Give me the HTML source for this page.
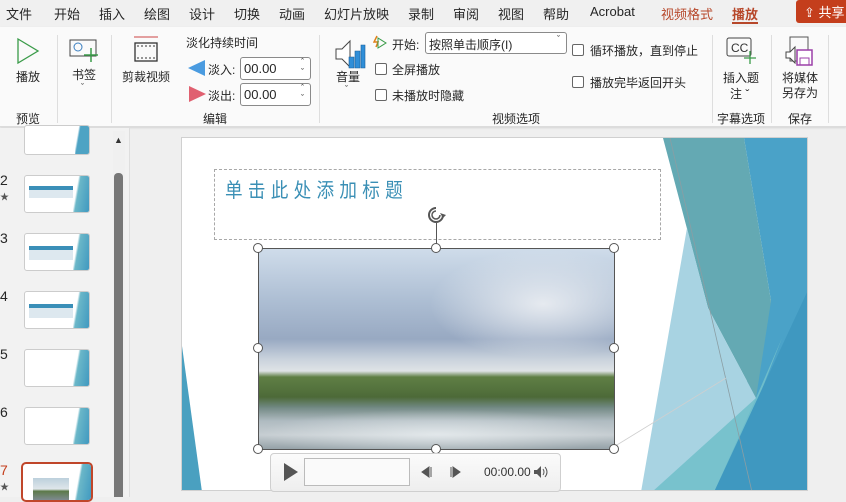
<!DOCTYPE html>
<html><head><meta charset="utf-8"><style>
*{margin:0;padding:0;box-sizing:border-box}
body{width:846px;height:497px;overflow:hidden;background:#efefef;font-family:"Liberation Sans","Noto Sans CJK SC",sans-serif;color:#262626;position:relative;font-size:12px}
.a{position:absolute;white-space:nowrap}
.tabs{position:absolute;left:0;top:0;width:846px;height:27px;background:#f0f0f0}
.tabs span{position:absolute;top:4px;font-size:13px}
.rib{position:absolute;left:0;top:27px;width:846px;height:100px;background:#fafafa;border-bottom:1px solid #dcdcdc;box-shadow:0 1px 2px rgba(0,0,0,.12)}
.sep{position:absolute;top:8px;width:1px;height:88px;background:#dedede}
.cb{position:absolute;width:12px;height:12px;border:1px solid #666;border-radius:2px;background:#fff}
.inp{position:absolute;border:1px solid #8a8a8a;border-radius:3px;background:#fff;font-size:13px;padding-left:3px}
.h{position:absolute;width:10px;height:10px;border:1.5px solid #555;border-radius:50%;background:#fff}
</style></head><body>
<div class="tabs">
<span style="left:6px">文件</span><span style="left:54px">开始</span><span style="left:99px">插入</span><span style="left:144px">绘图</span><span style="left:189px">设计</span><span style="left:234px">切换</span><span style="left:279px">动画</span><span style="left:324px">幻灯片放映</span><span style="left:408px">录制</span><span style="left:453px">审阅</span><span style="left:498px">视图</span><span style="left:543px">帮助</span><span style="left:590px">Acrobat</span><span style="left:661px;color:#b7472a">视频格式</span><span style="left:732px;color:#b7472a;font-weight:bold">播放</span>
<div class="a" style="left:732px;top:22px;width:26px;height:2px;background:#b7472a"></div>
<div class="a" style="left:796px;top:0;width:50px;height:23px;background:#c43e1c;border-radius:3px 0 0 3px;color:#fff;font-size:13px;padding:2px 0 0 8px">⇪ 共享</div>
</div>
<div class="rib">
<svg class="a" style="left:16px;top:10px" width="24" height="28"><path d="M2 2 L22 14 L2 26Z" fill="none" stroke="#3a9b49" stroke-width="1.3"/></svg>
<div class="a" style="left:16px;top:41px">播放</div>
<div class="a" style="left:16px;top:83px">预览</div>
<div class="sep" style="left:57px"></div>
<svg class="a" style="left:69px;top:9px" width="32" height="28"><rect x="1" y="4" width="26" height="16" fill="none" stroke="#444"/><circle cx="9" cy="11" r="4" fill="none" stroke="#3a7fc0"/><path d="M22 12v14M15 19h14" stroke="#3a9b49" stroke-width="1.5"/></svg>
<div class="a" style="left:72px;top:39px">书签</div>
<div class="a" style="left:81px;top:55px;font-size:9px">ˇ</div>
<div class="sep" style="left:111px"></div>
<svg class="a" style="left:133px;top:8px" width="26" height="28"><path d="M1 2h24" stroke="#c44" /><rect x="2" y="8" width="22" height="18" fill="none" stroke="#333" stroke-width="1.3"/><path d="M5 10v2M9 10v2M13 10v2M17 10v2M21 10v2M5 22v2M9 22v2M13 22v2M17 22v2M21 22v2" stroke="#333"/></svg>
<div class="a" style="left:122px;top:41px">剪裁视频</div>
<div class="a" style="left:186px;top:7px">淡化持续时间</div>
<svg class="a" style="left:188px;top:33px" width="18" height="16"><path d="M17 0v16L0 8z" fill="#4a9be0"/></svg>
<div class="a" style="left:208px;top:34px">淡入:</div>
<div class="inp" style="left:240px;top:30px;width:71px;height:23px;padding-top:3px">00.00<span style="position:absolute;right:6px;top:-1px;font-size:9px;line-height:10px">ˆ<br>ˇ</span></div>
<svg class="a" style="left:188px;top:59px" width="18" height="16"><path d="M1 0v16L18 8z" fill="#e06070"/></svg>
<div class="a" style="left:208px;top:60px">淡出:</div>
<div class="inp" style="left:240px;top:56px;width:71px;height:23px;padding-top:3px">00.00<span style="position:absolute;right:6px;top:-1px;font-size:9px;line-height:10px">ˆ<br>ˇ</span></div>
<div class="a" style="left:203px;top:83px">编辑</div>
<div class="sep" style="left:319px"></div>
<svg class="a" style="left:334px;top:12px" width="32" height="30"><path d="M2 10h6l8-8v26l-8-8H2z" fill="#fff" stroke="#444"/><path d="M15 18h5v11h-5zM21 12h5v17h-5zM27 6h4v23h-4z" fill="#2f8ed8" stroke="#1a5e99" stroke-width=".6"/></svg>
<div class="a" style="left:336px;top:41px">音量</div>
<div class="a" style="left:345px;top:57px;font-size:9px">ˇ</div>
<svg class="a" style="left:373px;top:8px" width="14" height="15"><path d="M4 1l-3 6h4l-2 5" fill="none" stroke="#e0801a" stroke-width="1.5"/><path d="M5 3l8 5-8 5z" fill="none" stroke="#3a9b49"/></svg>
<div class="a" style="left:392px;top:9px">开始:</div>
<div class="inp" style="left:425px;top:5px;width:142px;height:22px;padding-top:3px;font-size:12px">按照单击顺序(I)<span style="position:absolute;right:6px;top:1px;font-size:9px">ˇ</span></div>
<div class="cb" style="left:375px;top:36px"></div><div class="a" style="left:392px;top:34px">全屏播放</div>
<div class="cb" style="left:375px;top:62px"></div><div class="a" style="left:392px;top:60px">未播放时隐藏</div>
<div class="cb" style="left:572px;top:17px"></div><div class="a" style="left:590px;top:15px">循环播放，直到停止</div>
<div class="cb" style="left:572px;top:49px"></div><div class="a" style="left:590px;top:47px">播放完毕返回开头</div>
<div class="a" style="left:492px;top:83px">视频选项</div>
<div class="sep" style="left:712px"></div>
<svg class="a" style="left:726px;top:10px" width="32" height="28"><rect x="1" y="1" width="24" height="18" rx="2" fill="none" stroke="#444"/><text x="5" y="15" font-size="12" font-family="Liberation Sans" fill="#333">CC</text><path d="M24 14v13M18 21h12" stroke="#3a9b49" stroke-width="1.3"/></svg>
<div class="a" style="left:723px;top:42px">插入题</div>
<div class="a" style="left:730px;top:58px">注 ˇ</div>
<div class="a" style="left:717px;top:83px">字幕选项</div>
<div class="sep" style="left:771px"></div>
<svg class="a" style="left:785px;top:9px" width="30" height="32"><rect x="5" y="1" width="18" height="24" fill="none" stroke="#555"/><path d="M1 16h4l5-5v16l-5-5H1z" fill="#fff" stroke="#444"/><rect x="12" y="14" width="15" height="15" fill="#fff" stroke="#9b3fa8" stroke-width="1.5"/><rect x="15" y="22" width="9" height="7" fill="none" stroke="#9b3fa8"/></svg>
<div class="a" style="left:782px;top:42px">将媒体</div>
<div class="a" style="left:782px;top:57px">另存为</div>
<div class="a" style="left:788px;top:83px">保存</div>
<div class="sep" style="left:828px"></div>
</div>
<!-- left panel -->
<div class="a" style="left:0;top:128px;width:130px;height:369px;background:#f2f2f2;border-right:1px solid #dedede"></div>
<div class="a" style="left:113px;top:131px;width:12px;height:366px;background:#f0f0f0"></div>
<div class="a" style="left:114px;top:135px;font-size:9px;color:#333">▲</div>
<div class="a" style="left:114px;top:173px;width:9px;height:324px;background:#777;border-radius:4px 4px 0 0"></div>
<div class="a" style="left:24px;top:125px;width:66px;height:30px;background:#fff;border:1px solid #ccc;border-radius:3px;overflow:hidden"><div class="a" style="right:0;top:0;width:14px;height:30px;background:linear-gradient(100deg,#fff 20%,#4ea3c4 30%)"></div></div>
<div class="a" style="left:0;top:172px;font-size:14px">2</div><div class="a" style="left:0;top:190px;font-size:9px;color:#555">★</div>
<div class="a" style="left:0;top:230px;font-size:14px">3</div>
<div class="a" style="left:0;top:288px;font-size:14px">4</div>
<div class="a" style="left:0;top:346px;font-size:14px">5</div>
<div class="a" style="left:0;top:404px;font-size:14px">6</div>
<div class="a" style="left:0;top:462px;font-size:14px;color:#c43e1c">7</div><div class="a" style="left:0;top:480px;font-size:9px;color:#555">★</div>
<div class="a" style="left:24px;top:175px;width:66px;height:38px;background:#fff;border:1px solid #ccc;border-radius:3px;overflow:hidden"><div class="a" style="left:4px;top:10px;width:44px;height:4px;background:#3a8fb8"></div><div class="a" style="left:4px;top:14px;width:44px;height:8px;background:#dde8ef"></div><div class="a" style="right:0;top:0;width:16px;height:38px;background:linear-gradient(100deg,#fff 25%,#6bb7c8 35%,#3f98c0)"></div></div>
<div class="a" style="left:24px;top:233px;width:66px;height:38px;background:#fff;border:1px solid #ccc;border-radius:3px;overflow:hidden"><div class="a" style="left:4px;top:12px;width:44px;height:4px;background:#3a8fb8"></div><div class="a" style="left:4px;top:16px;width:44px;height:10px;background:#dde8ef"></div><div class="a" style="right:0;top:0;width:16px;height:38px;background:linear-gradient(100deg,#fff 25%,#6bb7c8 35%,#3f98c0)"></div></div>
<div class="a" style="left:24px;top:291px;width:66px;height:38px;background:#fff;border:1px solid #ccc;border-radius:3px;overflow:hidden"><div class="a" style="left:4px;top:12px;width:44px;height:4px;background:#3a8fb8"></div><div class="a" style="left:4px;top:16px;width:44px;height:10px;background:#dde8ef"></div><div class="a" style="right:0;top:0;width:16px;height:38px;background:linear-gradient(100deg,#fff 25%,#6bb7c8 35%,#3f98c0)"></div></div>
<div class="a" style="left:24px;top:349px;width:66px;height:38px;background:#fff;border:1px solid #ccc;border-radius:3px;overflow:hidden"><div class="a" style="right:0;top:0;width:16px;height:38px;background:linear-gradient(100deg,#fff 25%,#6bb7c8 35%,#3f98c0)"></div></div>
<div class="a" style="left:24px;top:407px;width:66px;height:38px;background:#fff;border:1px solid #ccc;border-radius:3px;overflow:hidden"><div class="a" style="right:0;top:0;width:16px;height:38px;background:linear-gradient(100deg,#fff 25%,#6bb7c8 35%,#3f98c0)"></div></div>
<div class="a" style="left:21px;top:462px;width:72px;height:40px;border:2.5px solid #c0462a;border-radius:5px;background:#fff;overflow:hidden"><div class="a" style="left:10px;top:14px;width:36px;height:22px;background:linear-gradient(#bcd0dc,#dfe6ea 50%,#5d7a4a 60%,#7e8a90)"></div><div class="a" style="right:0;top:0;width:16px;height:40px;background:linear-gradient(100deg,#fff 25%,#6bb7c8 35%,#3f98c0)"></div></div>
<!-- slide -->
<div class="a" style="left:181px;top:137px;width:627px;height:354px;background:#fff;border:1px solid #d0d0d0;overflow:hidden">
<svg width="627" height="354" style="position:absolute;left:0;top:0">
<path d="M0 208 L20 354 L0 354Z" fill="#4aa0c0"/>
<path d="M562 0 L627 0 L627 354 L532 354 L589 163 Z" fill="#4aa2c8"/>
<path d="M481 0 L562 0 L589 163 L574 260 L526 170 Z" fill="#64a9b3"/>
<path d="M505 90 L526 170 L574 260 L532 354 L459 354 Z" fill="#a8d3e2"/>
<path d="M574 260 L600 200 L540 354 L470 354 Z" fill="#72c0cb" opacity=".9"/>
<path d="M627 150 L627 354 L532 354 Z" fill="#3f98c0"/>
<path d="M488 0 L570 354" stroke="#8a9ea4" stroke-width=".8"/>
<path d="M544 240 L430 310" stroke="#cfcfcf" stroke-width=".8"/>
</svg>
<div class="a" style="left:32px;top:31px;width:447px;height:71px;border:1.5px dashed #a8a8a8"></div>
<div class="a" style="left:43px;top:36px;font-size:20px;letter-spacing:6px;color:#3a8fb5;font-family:'Noto Sans CJK SC',sans-serif;transform:scaleX(.88);transform-origin:left">单击此处添加标题</div>
</div>
<!-- rotate -->
<svg class="a" style="left:426px;top:204px" width="22" height="44"><path d="M10 4a7 7 0 1 0 7 7" fill="none" stroke="#555" stroke-width="2"/><path d="M10 7a4 4 0 1 0 4 4" fill="none" stroke="#555" stroke-width="1.5"/><path d="M14 9l6 2-3 3z" fill="#555"/><path d="M10.5 19v25" stroke="#555"/></svg>
<!-- video -->
<div class="a" style="left:258px;top:248px;width:357px;height:202px;border:1.5px solid #555;overflow:hidden;background:linear-gradient(#cfdcea 0%,#aebfd4 25%,#98a9c2 45%,#c9d2dc 55%,#dfe3e6 61%,#5f7f45 64%,#4d6a38 74%,#6f8780 79%,#b9c4ca 86%,#d4dade 93%,#9aa6ac 100%)">
<div class="a" style="left:170px;top:0;width:190px;height:110px;background:radial-gradient(ellipse at 60% 50%,rgba(240,242,245,.85),rgba(240,242,245,0) 70%)"></div>
<div class="a" style="left:0;top:160px;width:357px;height:42px;background:radial-gradient(ellipse at 50% 60%,rgba(235,240,242,.6),rgba(120,135,140,.15) 70%)"></div>
</div>
<div class="h" style="left:253px;top:243px"></div><div class="h" style="left:431px;top:243px"></div><div class="h" style="left:609px;top:243px"></div>
<div class="h" style="left:253px;top:343px"></div><div class="h" style="left:609px;top:343px"></div>
<div class="h" style="left:253px;top:444px"></div><div class="h" style="left:431px;top:444px"></div><div class="h" style="left:609px;top:444px"></div>
<!-- controls -->
<div class="a" style="left:270px;top:453px;width:291px;height:39px;border:1px solid #cfcfcf;border-radius:4px;background:linear-gradient(#fbfbfb,#eeeeee)"></div>
<svg class="a" style="left:283px;top:462px" width="16" height="20"><path d="M1 1L15 10L1 19Z" fill="#555"/></svg>
<div class="a" style="left:304px;top:458px;width:106px;height:28px;border:1px solid #bbb;background:#fafafa"></div>
<svg class="a" style="left:420px;top:465px" width="50" height="14"><path d="M9 2L2 7l7 5z M11 2v10" fill="#555" stroke="#555"/><path d="M31 2v10M33 2l7 5-7 5z" fill="#555" stroke="#555"/></svg>
<div class="a" style="left:484px;top:465px;font-size:12px;color:#333">00:00.00</div>
<svg class="a" style="left:533px;top:465px" width="18" height="14"><path d="M1 5h3l4-4v12l-4-4H1z" fill="#555"/><path d="M10 4q2 3 0 6M12 2q4 5 0 10" fill="none" stroke="#555"/></svg>
</body></html>
